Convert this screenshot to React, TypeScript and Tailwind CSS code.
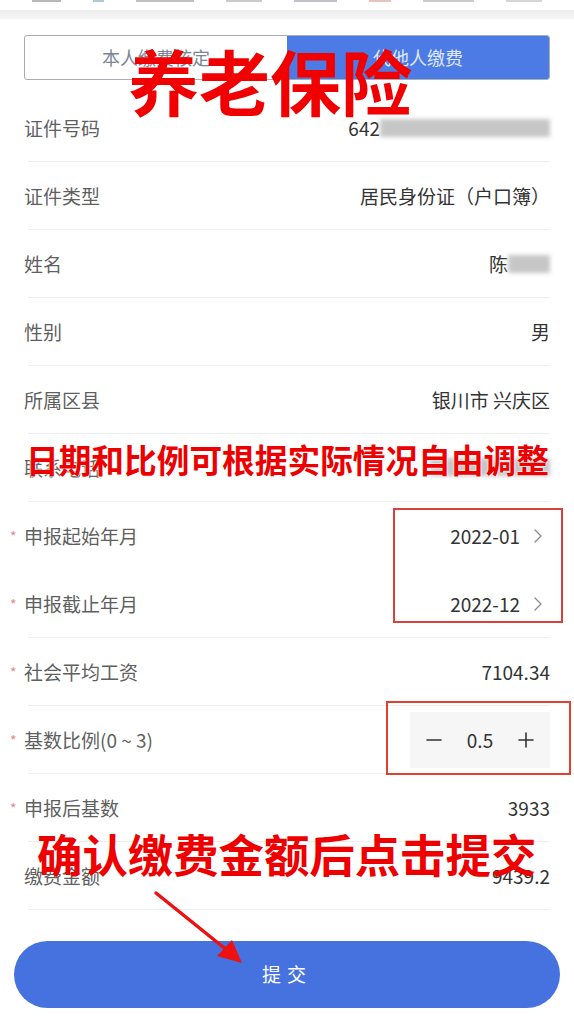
import { ChevronRight, Minus, Plus } from "lucide-react";

const font = { fontFamily: '"Noto Sans CJK SC", "Noto Sans", sans-serif' };

type Row = {
  label: string;
  value?: React.ReactNode;
  required?: boolean;
  divider?: boolean;
};

function Blur({ w }: { w: number }) {
  return (
    <span
      className="inline-block h-[18px] bg-[#b9b9b9] blur-[2px] opacity-80"
      style={{ width: w }}
    />
  );
}

function DateValue({ v }: { v: string }) {
  return (
    <span className="flex items-center gap-1.5">
      {v}
      <ChevronRight className="w-6 h-6 text-[#8a8a8a]" strokeWidth={1.3} />
    </span>
  );
}

function Stepper() {
  return (
    <div className="flex items-center justify-between w-[140px] h-[56px] bg-[#f6f6f6] px-3 text-[#333]">
      <Minus className="w-6 h-6" strokeWidth={1.6} />
      <span className="text-[19px]">0.5</span>
      <Plus className="w-6 h-6" strokeWidth={1.6} />
    </div>
  );
}

export default function App() {
  const rows: Row[] = [
    {
      label: "证件号码",
      value: (
        <span className="flex items-center">
          642
          <Blur w={170} />
        </span>
      ),
    },
    { label: "证件类型", value: "居民身份证（户口簿）" },
    {
      label: "姓名",
      value: (
        <span className="flex items-center">
          陈
          <Blur w={42} />
        </span>
      ),
    },
    { label: "性别", value: "男" },
    { label: "所属区县", value: "银川市 兴庆区" },
    {
      label: "联系电话",
      value: <Blur w={120} />,
    },
    { label: "申报起始年月", required: true, value: <DateValue v="2022-01" />, divider: false },
    { label: "申报截止年月", required: true, value: <DateValue v="2022-12" /> },
    { label: "社会平均工资", required: true, value: "7104.34" },
    { label: "基数比例(0 ~ 3)", required: true, value: <Stepper /> },
    { label: "申报后基数", required: true, value: "3933" },
    { label: "缴费金额", value: "9439.2" },
  ];

  return (
    <div className="relative w-[574px] h-[1024px] bg-white overflow-hidden" style={font}>
      {/* top edge of the phone screen */}
      <div className="flex gap-8 h-[2px] px-8 opacity-60">
        <span className="w-8 bg-[#888]" />
        <span className="w-3 bg-[#7ab]" />
        <span className="w-16 bg-[#999]" />
        <span className="w-10 bg-[#aaa]" />
        <span className="w-12 bg-[#99a]" />
        <span className="w-6 bg-[#d99]" />
        <span className="w-14 bg-[#aaa]" />
        <span className="w-10 bg-[#bbb]" />
      </div>
      <div className="h-[8px]" />
      <div className="h-[9px] bg-gradient-to-b from-[#ececec] to-[#f6f6f6]" />

      {/* tabs */}
      <div className="mt-[16px] mx-[24px] flex h-[45px] border-[1.5px] border-[#a9acb3] rounded-[3px] overflow-hidden text-[18px]">
        <div className="flex-1 flex items-center justify-center text-[#7d8597]">本人缴费核定</div>
        <div className="flex-1 flex items-center justify-center bg-[#4d7be6] text-[#dfe7fb]">代他人缴费</div>
      </div>

      {/* form rows */}
      <div className="mt-[14px]">
        {rows.map((r) => (
          <div key={r.label} className="relative h-[68px] px-[24px] flex items-center justify-between">
            {r.required && (
              <span className="absolute left-[10px] top-[24px] text-[14px] text-[#e48a8a]">*</span>
            )}
            <span className="text-[19px] text-[#5f5f5f]">{r.label}</span>
            <span className="text-[19px] text-[#333]">{r.value}</span>
            {r.divider !== false && (
              <div className="absolute left-[28px] right-[24px] bottom-0 h-px bg-[#eeeeee]" />
            )}
          </div>
        ))}
      </div>

      {/* submit button */}
      <div className="mt-[31px] px-[14px]">
        <button className="w-full h-[67px] rounded-full bg-[#4672e0] text-white text-[19px] tracking-[6px]">
          提交
        </button>
      </div>

      {/* annotation overlays */}
      <div className="absolute left-[128px] top-[44px] text-[71px] leading-none font-bold text-[#f00000]">
        养老保险
      </div>
      <div
        className="absolute left-[26px] top-[443px] text-[32.7px] leading-none font-bold text-[#ec0000] whitespace-nowrap"
        style={{ textShadow: "0 0 2px #fff, 0 0 2px #fff" }}
      >
        日期和比例可根据实际情况自由调整
      </div>
      <div className="absolute left-[393px] top-[508px] w-[170px] h-[115px] border-2 border-[#d9403a]" />
      <div className="absolute left-[386px] top-[701px] w-[185px] h-[74px] border-2 border-[#e0402f]" />
      <div className="absolute left-[37px] top-[831px] text-[45.4px] leading-none font-bold text-[#ee0000] whitespace-nowrap">
        确认缴费金额后点击提交
      </div>
      <svg className="absolute left-0 top-0" width="574" height="1024" viewBox="0 0 574 1024">
        <line x1="156" y1="893" x2="228" y2="951" stroke="#ee1111" strokeWidth="3.5" strokeLinecap="round" />
        <polygon points="242,963 217,956 232,940" fill="#ee1111" />
      </svg>
    </div>
  );
}
